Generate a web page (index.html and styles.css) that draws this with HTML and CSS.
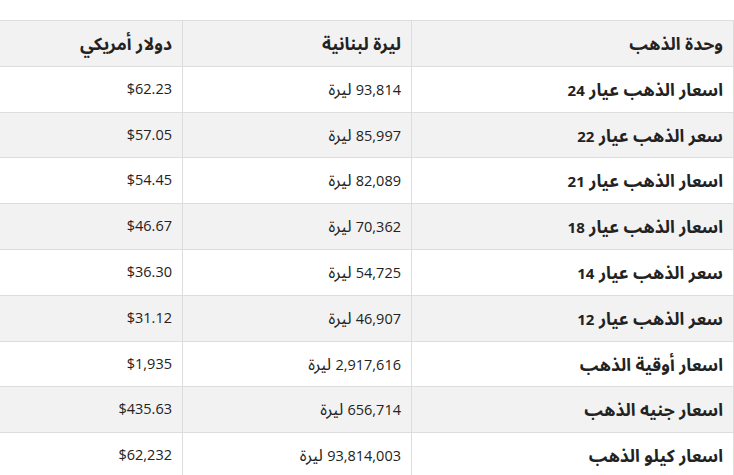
FILE: index.html
```html
<!DOCTYPE html>
<html lang="ar" dir="rtl">
<head>
<meta charset="utf-8">
<link rel="stylesheet" href="styles.css">
</head>
<body>
<div class="wrap">
<table class="prices">
<thead>
<tr><th class="c-unit">وحدة الذهب</th><th class="c-lbp">ليرة لبنانية</th><th class="c-usd">دولار أمريكي</th></tr>
</thead>
<tbody>
<tr><td>اسعار الذهب عيار <span class="num">24</span></td><td><span class="num">93,814</span> ليرة</td><td class="usd">$62.23</td></tr>
<tr><td>سعر الذهب عيار <span class="num">22</span></td><td><span class="num">85,997</span> ليرة</td><td class="usd">$57.05</td></tr>
<tr><td>اسعار الذهب عيار <span class="num">21</span></td><td><span class="num">82,089</span> ليرة</td><td class="usd">$54.45</td></tr>
<tr><td>اسعار الذهب عيار <span class="num">18</span></td><td><span class="num">70,362</span> ليرة</td><td class="usd">$46.67</td></tr>
<tr><td>سعر الذهب عيار <span class="num">14</span></td><td><span class="num">54,725</span> ليرة</td><td class="usd">$36.30</td></tr>
<tr><td>سعر الذهب عيار <span class="num">12</span></td><td><span class="num">46,907</span> ليرة</td><td class="usd">$31.12</td></tr>
<tr><td>اسعار أوقية الذهب</td><td><span class="num">2,917,616</span> ليرة</td><td class="usd">$1,935</td></tr>
<tr><td>اسعار جنيه الذهب</td><td><span class="num">656,714</span> ليرة</td><td class="usd">$435.63</td></tr>
<tr><td>اسعار كيلو الذهب</td><td><span class="num">93,814,003</span> ليرة</td><td class="usd">$62,232</td></tr>
</tbody>
</table>
</div>
</body>
</html>
```
FILE: styles.css
```css
html, body {
  margin: 0;
  padding: 0;
  background: #fff;
}
body {
  padding-top: 20px;
  font-family: "Open Sans", "Noto Sans Arabic", "DejaVu Sans", sans-serif;
  color: #222;
}
.wrap {
  width: 734px;
  overflow: hidden;
  direction: rtl;
}
.prices {
  direction: rtl;
  border-collapse: separate;
  border-spacing: 0;
  table-layout: fixed;
  width: 762px;
  border-top: 1px solid #dddddd;
  border-right: 1px solid #dddddd;
}
.prices th,
.prices td {
  box-sizing: border-box;
  border-left: 1px solid #dddddd;
  border-bottom: 1px solid #dddddd;
  padding: 10px 10px 10px 9px;
  height: 45.8px;
  line-height: 24.8px;
  text-align: right;
  white-space: nowrap;
  vertical-align: middle;
}
.c-unit { width: 322px; }
.c-lbp { width: 229px; }
.c-usd { width: 210px; }
.prices th {
  background: #f2f2f2;
  font-size: 17.5px;
  font-weight: 700;
  color: #222;
}
.prices td {
  font-size: 16.5px;
  color: #222;
}
.prices td:first-child {
  font-weight: 700;
  font-size: 17.5px;
}
.prices td.usd {
  font-size: 14.5px;
}
.num {
  font-size: 14.5px;
  line-height: 1;
}
.prices td:first-child .num {
  font-size: 15px;
}
.prices tbody tr:nth-child(even) td {
  background: #f2f2f2;
}
```
